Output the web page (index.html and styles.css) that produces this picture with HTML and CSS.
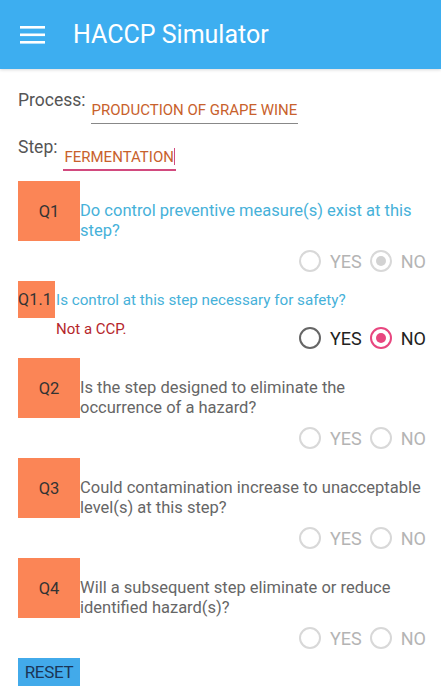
FILE: index.html
```html
<!DOCTYPE html>
<html lang="en">
<head>
    <meta charset="UTF-8">
    <meta name="viewport" content="width=device-width, initial-scale=1.0">
    <title>HACCP Simulator</title>
    <link rel="stylesheet" href="styles.css">
</head>
<body>

<div class="toolbar">
    <svg class="menu-icon" width="26" height="18" viewBox="0 0 26 18">
        <rect x="0" y="0" width="25" height="2.6" fill="#fff"/>
        <rect x="0" y="7.5" width="25" height="2.6" fill="#fff"/>
        <rect x="0" y="15" width="25" height="2.6" fill="#fff"/>
    </svg>
    <h1>HACCP Simulator</h1>
</div>

<div class="content">
    <div class="field">
        <span class="field-label">Process:</span>
        <span class="field-value">PRODUCTION OF GRAPE WINE</span>
    </div>
    <div class="field">
        <span class="field-label">Step:</span>
        <span class="field-value focused">FERMENTATION<span class="caret"></span></span>
    </div>

    <div class="question">
        <div class="q-row">
            <div class="q-tag">Q1</div>
            <div class="q-text blue">Do control preventive measure(s) exist at this step?</div>
        </div>
        <div class="answers disabled">
            <span class="radio"></span><span class="radio-label">YES</span>
            <span class="radio checked"></span><span class="radio-label">NO</span>
        </div>
    </div>

    <div class="question">
        <div class="q-row small">
            <div class="q-tag small">Q1.1</div>
            <div class="q-text blue">Is control at this step necessary for safety?</div>
        </div>
        <div class="answers">
            <span class="result">Not a CCP.</span>
            <span class="radio"></span><span class="radio-label">YES</span>
            <span class="radio checked"></span><span class="radio-label">NO</span>
        </div>
    </div>

    <div class="question">
        <div class="q-row">
            <div class="q-tag">Q2</div>
            <div class="q-text">Is the step designed to eliminate the occurrence of a hazard?</div>
        </div>
        <div class="answers disabled">
            <span class="radio"></span><span class="radio-label">YES</span>
            <span class="radio"></span><span class="radio-label">NO</span>
        </div>
    </div>

    <div class="question">
        <div class="q-row">
            <div class="q-tag">Q3</div>
            <div class="q-text">Could contamination increase to unacceptable level(s) at this step?</div>
        </div>
        <div class="answers disabled">
            <span class="radio"></span><span class="radio-label">YES</span>
            <span class="radio"></span><span class="radio-label">NO</span>
        </div>
    </div>

    <div class="question">
        <div class="q-row">
            <div class="q-tag">Q4</div>
            <div class="q-text">Will a subsequent step eliminate or reduce identified hazard(s)?</div>
        </div>
        <div class="answers disabled">
            <span class="radio"></span><span class="radio-label">YES</span>
            <span class="radio"></span><span class="radio-label">NO</span>
        </div>
    </div>

    <button class="reset">RESET</button>
</div>

</body>
</html>
```

FILE: styles.css
```css
body {
    font-family: Roboto, "Noto Sans", Arial, sans-serif;
    background-color: #fff;
    margin: 0;
    padding: 0;
    color: #222;
}

.toolbar {
    height: 69px;
    background-color: #3daef0;
    display: flex;
    align-items: center;
    padding-left: 20px;
    box-shadow: 0 1px 3px rgba(0, 0, 0, 0.15);
}

.menu-icon {
    margin-right: 27px;
}

.toolbar h1 {
    margin: 0;
    font-size: 25px;
    font-weight: 400;
    color: #fff;
}

.content {
    padding: 21px 15px 0 18px;
}

.field {
    display: flex;
    align-items: flex-start;
    margin-bottom: 13px;
}

.field + .field {
    margin-bottom: 10px;
}

.field-label {
    font-size: 17.5px;
    line-height: 20px;
    color: #555;
}

.field-value {
    margin-top: 11px;
    margin-left: 5px;
    padding: 0 1px 4px 1px;
    font-size: 15px;
    line-height: 18px;
    color: #c8612c;
    border-bottom: 1px solid #888;
}

.field-value.focused {
    margin-left: 6px;
    border-bottom: 2px solid #d24a7e;
    padding-bottom: 3px;
}

.caret {
    display: inline-block;
    width: 1px;
    height: 17px;
    background-color: #d24a7e;
    vertical-align: -3px;
}

.question {
    display: flex;
    flex-direction: column;
}

.q-row {
    display: flex;
    align-items: flex-start;
    height: 60px;
}

.q-row.small {
    height: 37px;
    align-items: center;
}

.q-tag {
    flex: 0 0 62px;
    height: 60px;
    background-color: #fb8556;
    display: flex;
    align-items: center;
    justify-content: center;
    font-size: 16.5px;
    color: #333;
}

.q-tag.small {
    flex: 0 0 37px;
    height: 37px;
    justify-content: flex-start;
    font-size: 16px;
    letter-spacing: 0.2px;
}

.q-text {
    padding-top: 20px;
    font-size: 16.5px;
    line-height: 20px;
    color: #666;
}

.q-row.small .q-text {
    padding-top: 0;
    margin-left: 1px;
    font-size: 15.2px;
}

.q-text.blue {
    color: #46b1d9;
}

.answers {
    height: 40px;
    display: flex;
    align-items: center;
    justify-content: flex-end;
}

.result {
    margin-right: auto;
    margin-left: 38px;
    align-self: flex-start;
    margin-top: 2px;
    font-size: 15px;
    color: #b5262c;
}

.radio {
    width: 18px;
    height: 18px;
    border: 2px solid #666;
    border-radius: 50%;
    display: flex;
    align-items: center;
    justify-content: center;
    margin-right: 9px;
}

.radio.checked {
    border-color: #e8467f;
}

.radio.checked::after {
    content: "";
    width: 10px;
    height: 10px;
    border-radius: 50%;
    background-color: #e8467f;
}

.radio-label {
    font-size: 18px;
    color: #222;
    margin-right: 8px;
}

.radio-label:last-child {
    margin-right: 0;
}

.disabled .radio {
    border-color: #d8d8d8;
}

.disabled .radio.checked::after {
    background-color: #d2d2d2;
}

.disabled .radio-label {
    color: #b4b4b4;
}

.reset {
    width: 62px;
    height: 28px;
    padding: 0;
    border: none;
    background-color: #42aaea;
    font-family: Roboto, Arial, sans-serif;
    font-size: 17px;
    color: #1b3556;
    letter-spacing: -0.3px;
}
```
